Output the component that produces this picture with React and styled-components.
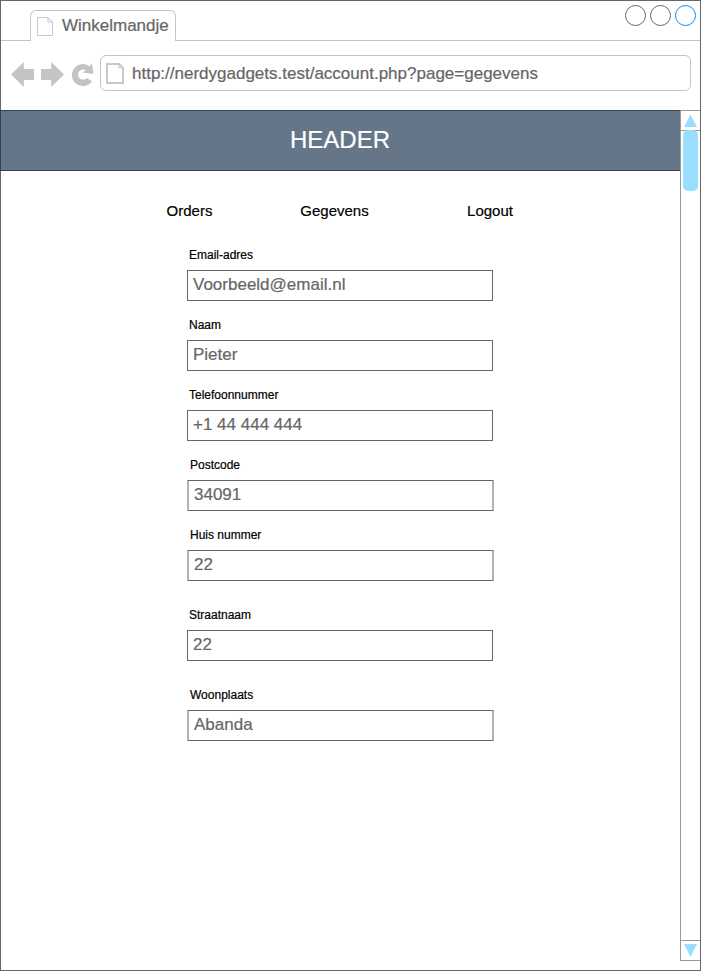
import React from 'react';
import styled, { createGlobalStyle } from 'styled-components';

const GlobalStyle = createGlobalStyle`
  * { box-sizing: border-box; }
  body {
    margin: 0;
    background: #fff;
    font-family: "Liberation Sans", Arial, Helvetica, sans-serif;
    -webkit-text-stroke-width: 0.2px;
  }
`;

const Window = styled.div`
  display: flex;
  flex-direction: column;
  width: 701px;
  height: 971px;
  border: 1px solid #666;
  background: #fff;
`;

const TitleBar = styled.header`
  display: flex;
  align-items: stretch;
  height: 40px;
`;

const Rule = styled.div`
  width: ${(p) => p.$width || 'auto'};
  flex: ${(p) => (p.$width ? 'none' : 1)};
  display: flex;
  justify-content: flex-end;
  gap: 4px;
  padding: ${(p) => (p.$width ? 0 : '4px 4px 0 0')};
  border-bottom: 1px solid #c4c4c4;
`;

const Tab = styled.div`
  width: 146px;
  height: 31px;
  margin-top: 9px;
  padding-left: 6px;
  display: flex;
  align-items: center;
  gap: 9px;
  border: 1px solid #c4c4c4;
  border-bottom: 0;
  border-radius: 6px 6px 0 0;
  color: #666;
  font-size: 17px;
  line-height: 20px;
`;

const WindowButton = styled.span`
  width: 21px;
  height: 21px;
  border: 1px solid ${(p) => p.$color};
  border-radius: 50%;
`;

const Toolbar = styled.div`
  display: flex;
  height: 69px;
  padding: 14px 9px 0 10px;
`;

const NavIcons = styled.svg`
  width: 89px;
  height: 36px;
  flex: none;
`;

const AddressBar = styled.div`
  flex: 1;
  height: 36px;
  padding: 1px 5px 0;
  display: flex;
  align-items: center;
  gap: 8px;
  border: 1px solid #c4c4c4;
  border-radius: 6px;
  color: #666;
  font-size: 17px;
  line-height: 20px;
`;

const Viewport = styled.div`
  display: flex;
  height: 851px;
`;

const Page = styled.main`
  flex: 1;
`;

const Banner = styled.h1`
  height: 61px;
  margin: 0 0 0 -1px;
  padding-right: 1px;
  border: 1px solid #314354;
  border-right: 0;
  background: #647687;
  color: #fff;
  font-size: 24px;
  font-weight: 400;
  line-height: 57px;
  text-align: center;
`;

const Nav = styled.nav`
  display: grid;
  grid-template-columns: 133px 157px 154px;
  margin: 31px 0 0 122px;
  height: 18px;
  color: #000;
  font-size: 15px;
  line-height: 18px;
  text-align: center;
`;

const Form = styled.div`
  margin: 27px 0 0 186px;
  width: 307px;
`;

const Field = styled.div`
  height: ${(p) => p.$height}px;
`;

const Label = styled.div`
  height: 23px;
  padding-left: ${(p) => (p.$shifted ? 3 : 2)}px;
  color: #000;
  font-size: 12px;
  line-height: 17px;
`;

const Value = styled.div`
  width: ${(p) => (p.$shifted ? 307 : 306)}px;
  height: 31px;
  padding-left: 5px;
  border: 1px solid #666;
  border-width: 1px ${(p) => (p.$shifted ? '2px 1px 2px' : '1px')};
  border-left-color: ${(p) => (p.$shifted ? '#b2b2b2' : '#666')};
  border-right-color: ${(p) => (p.$shifted ? '#b2b2b2' : '#666')};
  color: #666;
  font-size: 17px;
  line-height: 27px;
`;

const Scrollbar = styled.div`
  display: flex;
  flex-direction: column;
  width: 20px;
  height: 851px;
  border: 1px solid #999;
  border-right: 0;
`;

const ScrollButton = styled.div`
  height: 20px;
  border-bottom: ${(p) => (p.$up ? '1px solid #999' : '0')};
  border-top: ${(p) => (p.$up ? '0' : '1px solid #999')};
  svg { display: block; }
`;

const Track = styled.div`
  flex: 1;
  padding-left: 2px;
`;

const Thumb = styled.div`
  width: 15px;
  height: 61px;
  margin-top: -1px;
  border-radius: 5px;
  background: #99ddff;
`;

const FIELDS = [
  { label: 'Email-adres', value: 'Voorbeeld@email.nl', height: 70 },
  { label: 'Naam', value: 'Pieter', height: 70 },
  { label: 'Telefoonnummer', value: '+1 44 444 444', height: 70 },
  { label: 'Postcode', value: '34091', height: 70, shifted: true },
  { label: 'Huis nummer', value: '22', height: 80, shifted: true },
  { label: 'Straatnaam', value: '22', height: 80 },
  { label: 'Woonplaats', value: 'Abanda', height: 70, shifted: true },
];

function PageIcon({ width, height, stroke }) {
  const o = stroke / 2;
  const fold = width - 5;
  return (
    <svg width={width} height={height} fill="none" stroke="#c8c8c8" strokeWidth={stroke}>
      <path d={`M${o} ${o}H${fold}L${width - o} 5V${height - o}H${o}Z`} />
      <path d={`M${fold} ${o}V5H${width - o}`} strokeWidth="1" />
    </svg>
  );
}

export default function App() {
  return (
    <>
      <GlobalStyle />
      <Window>
        <TitleBar>
          <Rule $width="29px" />
          <Tab><PageIcon width={16} height={19} stroke={1} />Winkelmandje</Tab>
          <Rule>
            <WindowButton $color="#666" />
            <WindowButton $color="#666" />
            <WindowButton $color="#008cff" />
          </Rule>
        </TitleBar>
        <Toolbar>
          <NavIcons viewBox="11 55 89 36" fill="#c4c4c4">
            <path d="M11 74.5L23.8 62V69H34V80H23.8V87Z" />
            <path d="M64 74.5L51.2 62V69H41V80H51.2V87Z" />
            <path d="M92 63.5L93.5 74L82.3 72.5L86 70.3A5.1 5.1 0 1 0 86.9 78L92 81.3A11 11 0 1 1 89.4 66.2Z" />
          </NavIcons>
          <AddressBar>
            <PageIcon width={18} height={21} stroke={2} />
            http://nerdygadgets.test/account.php?page=gegevens
          </AddressBar>
        </Toolbar>
        <Viewport>
          <Page>
            <Banner>HEADER</Banner>
            <Nav><span>Orders</span><span>Gegevens</span><span>Logout</span></Nav>
            <Form>
              {FIELDS.map((f) => (
                <Field key={f.label} $height={f.height}>
                  <Label $shifted={f.shifted}>{f.label}</Label>
                  <Value $shifted={f.shifted}>{f.value}</Value>
                </Field>
              ))}
            </Form>
          </Page>
          <Scrollbar>
            <ScrollButton $up>
              <svg width="19" height="19"><path d="M3 16H16L9.5 3.5Z" fill="#99ddff" /></svg>
            </ScrollButton>
            <Track><Thumb /></Track>
            <ScrollButton>
              <svg width="19" height="19"><path d="M3 3H16L9.5 16Z" fill="#99ddff" /></svg>
            </ScrollButton>
          </Scrollbar>
        </Viewport>
      </Window>
    </>
  );
}
